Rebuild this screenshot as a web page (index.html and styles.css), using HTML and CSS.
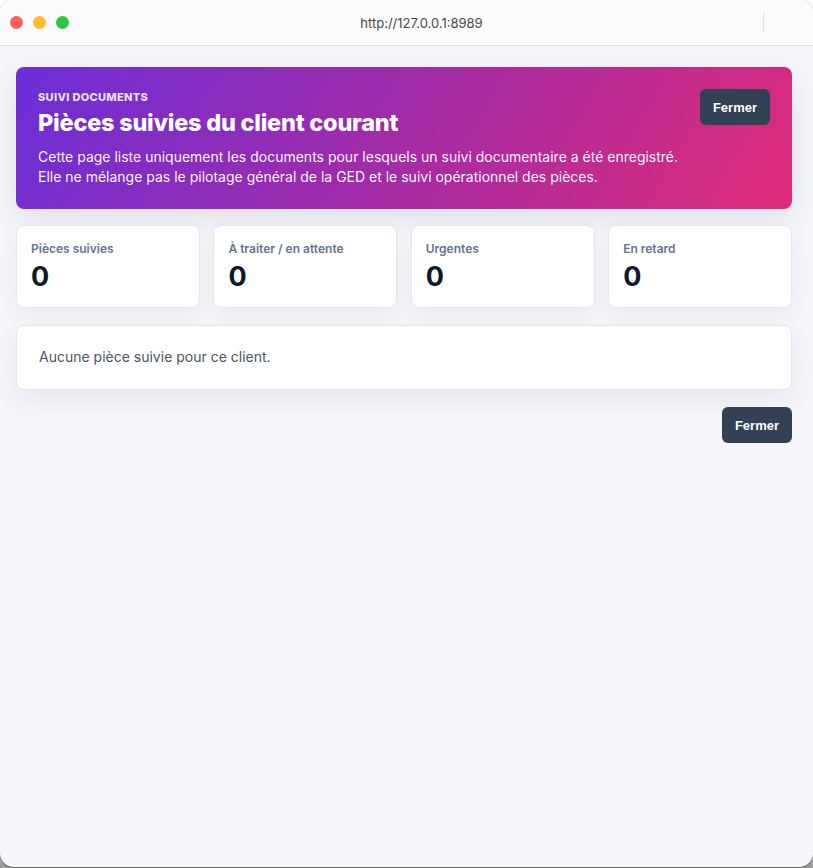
FILE: index.html
```html
<!DOCTYPE html>
<html lang="fr">
<head>
<meta charset="utf-8">
<title>Suivi documents</title>
<link rel="stylesheet" href="styles.css">
</head>
<body>
<div class="window">
  <div class="titlebar">
    <div class="lights">
      <span class="light red"></span>
      <span class="light yellow"></span>
      <span class="light green"></span>
    </div>
    <div class="url">http://127.0.0.1:8989</div>
    <div class="divider"></div>
  </div>
  <div class="content">
    <div class="page">
      <section class="hero">
        <div class="hero-text">
          <div class="eyebrow">SUIVI DOCUMENTS</div>
          <h1 class="hero-title">Pièces suivies du client courant</h1>
          <p class="hero-desc">Cette page liste uniquement les documents pour lesquels un suivi documentaire a été enregistré.<br>Elle ne mélange pas le pilotage général de la GED et le suivi opérationnel des pièces.</p>
        </div>
        <button class="btn">Fermer</button>
      </section>

      <section class="stats">
        <div class="stat">
          <div class="stat-label">Pièces suivies</div>
          <div class="stat-value">0</div>
        </div>
        <div class="stat">
          <div class="stat-label">À traiter / en attente</div>
          <div class="stat-value">0</div>
        </div>
        <div class="stat">
          <div class="stat-label">Urgentes</div>
          <div class="stat-value">0</div>
        </div>
        <div class="stat">
          <div class="stat-label">En retard</div>
          <div class="stat-value">0</div>
        </div>
      </section>

      <section class="empty">Aucune pièce suivie pour ce client.</section>

      <div class="actions">
        <button class="btn">Fermer</button>
      </div>
    </div>
  </div>
</div>
</body>
</html>
```

FILE: styles.css
```css
* { box-sizing: border-box; }

html, body {
  margin: 0;
  padding: 0;
  height: 100%;
}

body {
  background: linear-gradient(#ffffff 0, #ffffff 820px, #9a9a9a 868px);
  font-family: Inter, "Noto Sans", sans-serif;
  overflow: hidden;
}

.window {
  height: 867px;
  width: 813px;
  background: #f6f7fb;
  border-radius: 12px 12px 14px 14px;
  box-shadow: 0 0 0 1px rgba(0,0,0,0.06), 0 1px 2px rgba(0,0,0,0.35);
  display: flex;
  flex-direction: column;
  overflow: hidden;
}

.titlebar {
  height: 46px;
  flex: none;
  background: #fbfbfb;
  border-bottom: 1px solid #dddddd;
  display: flex;
  align-items: center;
  padding: 0 49px 0 10px;
}

.lights {
  display: flex;
  gap: 10px;
  width: 60px;
}

.light {
  width: 13px;
  height: 13px;
  border-radius: 50%;
  display: block;
}
.red { background: #fe5f57; }
.yellow { background: #febc2e; }
.green { background: #28c840; }

.url {
  flex: 1;
  text-align: center;
  padding-left: 10px;
  font-size: 13px;
  color: #4a4a4a;
  font-family: Inter, "Liberation Sans", sans-serif;
}

.divider {
  width: 1px;
  height: 19px;
  background: #e0e0e0;
}

.content {
  flex: 1;
  padding: 21px 21px 0 16px;
}

.page {
  display: flex;
  flex-direction: column;
}

.hero {
  display: flex;
  justify-content: space-between;
  align-items: flex-start;
  padding: 22px 22px 23px;
  margin-bottom: 16px;
  border-radius: 8px;
  background: linear-gradient(120deg, #6b2ed8 0%, #a12ca8 48%, #de2b77 100%);
  color: #ffffff;
  box-shadow: 0 10px 28px rgba(15, 23, 42, 0.10);
}

.eyebrow {
  font-size: 11px;
  line-height: 16px;
  font-weight: 800;
  letter-spacing: 0.03em;
  color: rgba(255, 255, 255, 0.86);
}

.hero-title {
  margin: 4px 0 0;
  font-size: 23.5px;
  line-height: 28px;
  font-weight: 800;
  letter-spacing: -0.01em;
}

.hero-desc {
  margin: 10px 0 0;
  font-size: 14px;
  line-height: 19.5px;
  font-weight: 400;
  color: rgba(255, 255, 255, 0.97);
}

.btn {
  height: 36px;
  padding: 0 13px;
  border: none;
  border-radius: 6px;
  background: #334155;
  color: #ffffff;
  font-family: "Liberation Sans", Arial, sans-serif;
  font-weight: 700;
  font-size: 13px;
  cursor: pointer;
}

.stats {
  display: grid;
  grid-template-columns: repeat(4, 1fr);
  gap: 13.5px;
  margin-bottom: 17px;
}

.stat {
  background: #ffffff;
  border: 1px solid #e2e8f0;
  border-radius: 8px;
  padding: 15px 14px 15px;
  box-shadow: 0 8px 22px rgba(15, 23, 42, 0.05);
}

.stat-label {
  font-size: 12px;
  line-height: 16px;
  font-weight: 600;
  color: #64748b;
}

.stat-value {
  margin-top: 5px;
  font-size: 27px;
  line-height: 30px;
  font-weight: 700;
  color: #0f172a;
}

.empty {
  background: #ffffff;
  border: 1px solid #e2e8f0;
  border-radius: 8px;
  padding: 21px 22px 22px;
  margin-bottom: 17px;
  font-size: 14px;
  line-height: 20px;
  color: #4b5563;
  box-shadow: 0 10px 26px rgba(15, 23, 42, 0.07);
}

.actions {
  display: flex;
  justify-content: flex-end;
}
```
